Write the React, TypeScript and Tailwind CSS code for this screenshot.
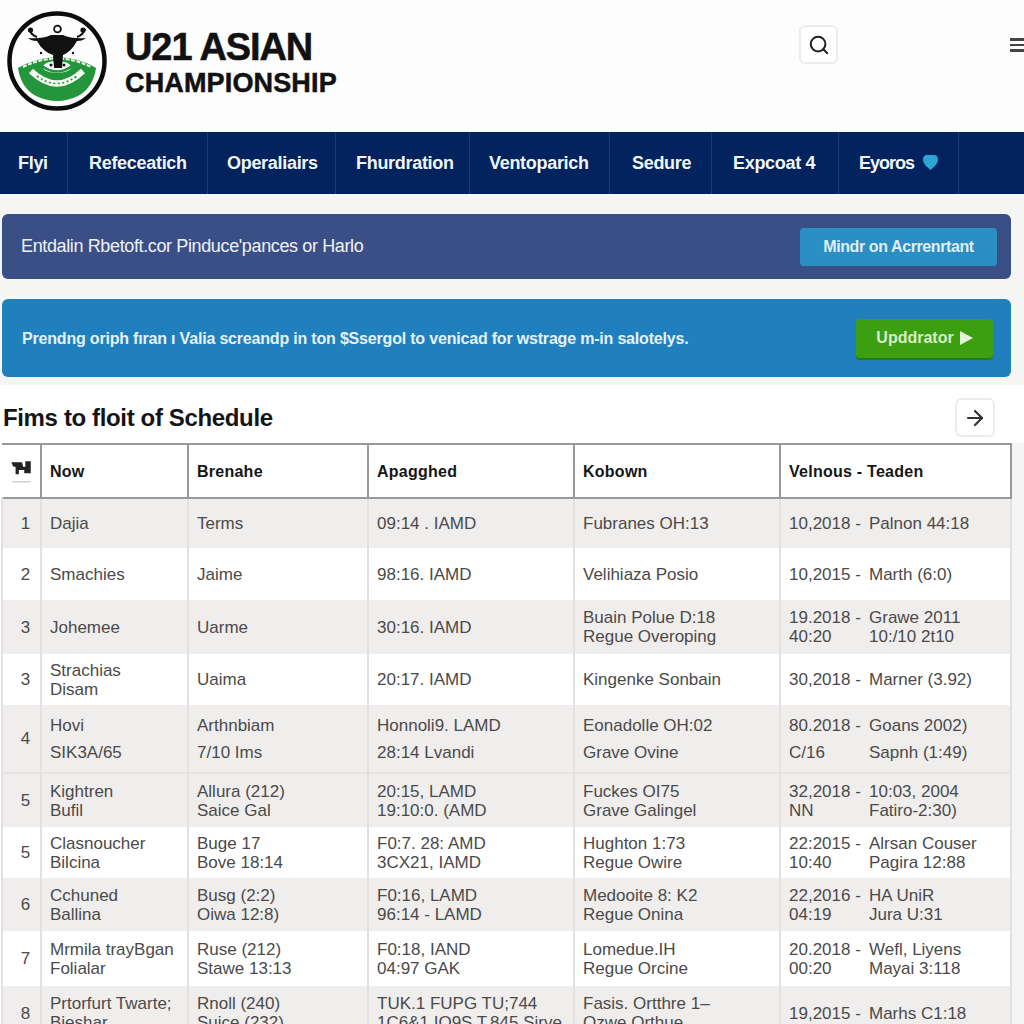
import { ArrowRight, Search } from 'lucide-react';

type Row = {
  no: string;
  bg: string;
  height: string;
  leading?: string;
  now: string[];
  branch: string[];
  applied: string[];
  known: string[];
  venue: string[][];
};

const navItems = [
  { label: 'Flyi', cell: 'w-[68px] pl-[18px]' },
  { label: 'Refeceatich', cell: 'w-[140px] pl-[21px]' },
  { label: 'Operaliairs', cell: 'w-[128px] pl-[19px]' },
  { label: 'Fhurdration', cell: 'w-[134px] pl-[20px]' },
  { label: 'Ventoparich', cell: 'w-[140px] pl-[19px]' },
  { label: 'Sedure', cell: 'w-[102px] pl-[22px]' },
  { label: 'Expcoat 4', cell: 'w-[127px] pl-[21px]' },
];

const rows: Row[] = [
  { no: '1', bg: 'bg-[#f0eded]', height: 'h-[50px]', now: ['Dajia'], branch: ['Terms'], applied: ['09:14 . IAMD'], known: ['Fubranes OH:13'], venue: [['10,2018 -', 'Palnon 44:18']] },
  { no: '2', bg: 'bg-white', height: 'h-[52px]', now: ['Smachies'], branch: ['Jaime'], applied: ['98:16. IAMD'], known: ['Velihiaza Posio'], venue: [['10,2015 -', 'Marth (6:0)']] },
  { no: '3', bg: 'bg-[#f0eded]', height: 'h-[54px]', now: ['Johemee'], branch: ['Uarme'], applied: ['30:16. IAMD'], known: ['Buain Polue D:18', 'Regue Overoping'], venue: [['19.2018 -', 'Grawe 2011'], ['40:20', '10:/10 2t10']] },
  { no: '3', bg: 'bg-white', height: 'h-[51px]', now: ['Strachias', 'Disam'], branch: ['Uaima'], applied: ['20:17. IAMD'], known: ['Kingenke Sonbain'], venue: [['30,2018 -', 'Marner (3.92)']] },
  { no: '4', bg: 'bg-[#f0eded] border-b-2 border-[#e6e3e3]', height: 'h-[68px]', leading: 'leading-[27px]', now: ['Hovi', 'SIK3A/65'], branch: ['Arthnbiam', '7/10 Ims'], applied: ['Honnoli9. LAMD', '28:14 Lvandi'], known: ['Eonadolle OH:02', 'Grave Ovine'], venue: [['80.2018 -', 'Goans 2002)'], ['C/16', 'Sapnh (1:49)']] },
  { no: '5', bg: 'bg-[#f0eded]', height: 'h-[54px]', now: ['Kightren', 'Bufil'], branch: ['Allura (212)', 'Saice Gal'], applied: ['20:15, LAMD', '19:10:0. (AMD'], known: ['Fuckes OI75', 'Grave Galingel'], venue: [['32,2018 -', '10:03, 2004'], ['NN', 'Fatiro-2:30)']] },
  { no: '5', bg: 'bg-white', height: 'h-[51px]', now: ['Clasnoucher', 'Bilcina'], branch: ['Buge 17', 'Bove 18:14'], applied: ['F0:7. 28: AMD', '3CX21, IAMD'], known: ['Hughton 1:73', 'Regue Owire'], venue: [['22:2015 -', 'Alrsan Couser'], ['10:40', 'Pagira 12:88']] },
  { no: '6', bg: 'bg-[#f0eded]', height: 'h-[53px]', now: ['Cchuned', 'Ballina'], branch: ['Busg (2:2)', 'Oiwa 12:8)'], applied: ['F0:16, LAMD', '96:14 - LAMD'], known: ['Medooite 8: K2', 'Regue Onina'], venue: [['22,2016 -', 'HA UniR'], ['04:19', 'Jura U:31']] },
  { no: '7', bg: 'bg-white', height: 'h-[55px]', now: ['Mrmila trayBgan', 'Folialar'], branch: ['Ruse (212)', 'Stawe 13:13'], applied: ['F0:18, IAND', '04:97 GAK'], known: ['Lomedue.IH', 'Regue Orcine'], venue: [['20.2018 -', 'Wefl, Liyens'], ['00:20', 'Mayai 3:118']] },
  { no: '8', bg: 'bg-[#f0eded]', height: 'h-[54px]', now: ['Prtorfurt Twarte;', 'Bieshar'], branch: ['Rnoll (240)', 'Suice (232)'], applied: ['TUK.1 FUPG TU;744', '1C6&1 IO9S T.845 Sirve'], known: ['Fasis. Ortthre 1\u2013', 'Ozwe Orthue'], venue: [['19,2015 -', 'Marhs C1:18']] },
];

const headCell = 'border-l-2 border-[#999] px-2 text-left font-bold tracking-[0.25px] text-[#161616]';
const bodyCell = 'border-l-2 border-[#e2e0e0] px-2 align-middle';

const Lines = ({ items }: { items: string[] }) => (
  <>
    {items.map((line) => (
      <div key={line} className='whitespace-nowrap'>{line}</div>
    ))}
  </>
);

const Logo = () => (
  <svg width={115} height={115} viewBox='0 0 115 115' className='shrink-0'>
    <path d='M18 68 Q35 58 57 57 Q80 58 96 68 Q93 88 78 96 Q57 106 36 96 Q21 88 18 68 Z' fill='#23963c' />
    <path d='M23 67 Q57 50 91 67' fill='none' stroke='#eef6e6' strokeWidth='2' strokeDasharray='4 1.5' />
    <path d='M31 71 Q57 96 83 71' fill='none' stroke='#f4f9f1' strokeWidth='6' />
    <path d='M37 76 Q57 91 77 76' fill='none' stroke='#23963c' strokeWidth='1.6' strokeDasharray='2 2.5' />
    <ellipse cx='57' cy='67' rx='14' ry='6' fill='#fff' />
    <path d='M42 66 Q57 77 72 66' fill='none' stroke='#23963c' strokeWidth='2.5' />
    <path d='M29 29 Q31 35 37 37 M85 29 Q83 35 77 37' fill='none' stroke='#111' strokeWidth='2.2' />
    <path d='M28 38 Q42 39 51 35 L63 35 Q72 39 86 38 Q83 41 77 41 Q71 52 63 55 L62 68 L54 68 L53 55 Q43 52 37 41 Q31 41 28 38 Z' fill='#111' />
    <circle cx='30.5' cy='30' r='2.6' fill='#111' />
    <circle cx='83' cy='30' r='2.6' fill='#111' />
    <circle cx='57.5' cy='29' r='3.4' fill='none' stroke='#111' strokeWidth='1.8' />
    <circle cx='41' cy='53' r='1.2' fill='#111' />
    <circle cx='73' cy='53' r='1.2' fill='#111' />
    <circle cx='51' cy='65' r='1.5' fill='#111' />
    <circle cx='64' cy='65' r='1.5' fill='#111' />
    <circle cx='57' cy='61' r='47.5' fill='none' stroke='#0c0c0c' strokeWidth='4.5' />
  </svg>
);

export default function App() {
  return (
    <div className="h-[1024px] w-[1024px] overflow-hidden bg-white font-['Liberation_Sans',Arial,sans-serif]">
      <header className='flex h-[132px] items-start justify-between bg-[#fdfdfd]'>
        <div className='flex items-start'>
          <Logo />
          <div className='ml-[10px] pt-[26px] font-bold text-[#111] [-webkit-text-stroke:0.5px_#111]'>
            <div className='text-[38px] leading-[42px] tracking-[-1.1px]'>U21 ASIAN</div>
            <div className='text-[27px] leading-[30px] tracking-[0.15px]'>CHAMPIONSHIP</div>
          </div>
        </div>
        <div className='flex items-start'>
          <button className='mt-[25px] flex h-[39px] w-[39px] items-center justify-center rounded-md border-2 border-[#ececec] bg-white'>
            <Search size={22} strokeWidth={2.2} className='text-[#222]' />
          </button>
          <div className='ml-[172px] mt-[38px] flex w-[14px] flex-col gap-[3px]'>
            <span className='h-[2.5px] bg-[#444]' />
            <span className='h-[2.5px] bg-[#444]' />
            <span className='h-[2.5px] bg-[#444]' />
          </div>
        </div>
      </header>

      <nav className='flex h-[62px] bg-[#02235e] text-[18px] font-bold tracking-[-0.3px] text-[#f2f5f8]'>
        {navItems.map((item) => (
          <div key={item.label} className={`flex items-center border-r border-[#1b3a72] ${item.cell}`}>
            <span className='whitespace-nowrap'>{item.label}</span>
          </div>
        ))}
        <div className='flex w-[120px] items-center gap-[9px] border-r border-[#1b3a72] pl-[20px]'>
          <span className='tracking-[-1px]'>Eyoros</span>
          <svg width={15} height={15} viewBox='0 0 15 15' className='-mt-[2px]'>
            <path d='M7.5 15 Q0 9 0 5 Q0 0 4 0 L11 0 Q15 0 15 5 Q15 9 7.5 15 Z' fill='#2ba4d6' />
          </svg>
        </div>
      </nav>

      <section className='h-[191px] bg-[#f5f5f4] pl-[2px] pr-[13px] pt-[20px]'>
        <div className='flex h-[65px] items-center justify-between rounded-md bg-[#3a4f85] pl-[19px] pr-[14px]'>
          <span className='text-[18px] tracking-[-0.37px] text-[#f0f2f6]'>Entdalin Rbetoft.cor Pinduce'pances or Harlo</span>
          <button className='flex h-[38px] w-[197px] items-center justify-center rounded bg-[#2b8fc4] text-[16px] font-bold tracking-[-0.4px] text-[#dfeef6]'>
            Mindr on Acrrenrtant
          </button>
        </div>
        <div className='mt-[20px] flex h-[78px] items-center justify-between rounded-md bg-[#1f80bd] pl-[20px] pr-[18px]'>
          <span className='pt-[2px] text-[16px] font-bold tracking-[-0.19px] text-[#e6f1f8]'>Prendng oriph fıran ı Valia screandp in ton $Ssergol to venicad for wstrage m-in salotelys.</span>
          <button className='flex h-[39px] w-[137px] items-center justify-center gap-[6px] rounded bg-[#3c9f12] text-[16px] font-bold text-[#d8eec8] shadow-[0_2px_0_#2a7a10]'>
            Upddrator
            <svg width={13} height={14} viewBox='0 0 13 14'><path d='M0 0 L13 7 L0 14 Z' fill='#e4f2d8' /></svg>
          </button>
        </div>
      </section>

      <section className='flex h-[58px] items-start justify-between pl-[3px] pr-[29px] pt-[13px]'>
        <h2 className='mt-[5px] text-[24px] font-bold leading-[30px] tracking-[-0.36px] text-[#141414]'>Fims to floit of Schedule</h2>
        <button className='flex h-[39px] w-[40px] items-center justify-center rounded-md border-2 border-[#ececec] bg-white'>
          <ArrowRight size={24} strokeWidth={2.2} className='text-[#333]' />
        </button>
      </section>

      <div className='flex'>
        <div className='w-[1px] shrink-0' />
        <table className='w-[1009px] table-fixed border-collapse text-[17px] leading-[19px] text-[#4a4a4a]'>
          <colgroup>
            <col className='w-[39px]' />
            <col className='w-[147px]' />
            <col className='w-[180px]' />
            <col className='w-[206px]' />
            <col className='w-[206px]' />
            <col className='w-[231px]' />
          </colgroup>
          <thead>
            <tr className='h-[54px] border-y-2 border-[#999] text-[16px]'>
              <th className='px-0'>
                <svg width={24} height={26} viewBox='0 0 22 24' className='mx-auto'>
                  <path d='M2 4 H12 L13 8 H15 V3 H18 V3 H20 V14 H14 V11 H9 V15 H6 V8 H4 Z' fill='#222' />
                  <path d='M3 22 H20' stroke='#bbb' strokeWidth='1' />
                </svg>
              </th>
              <th className={headCell}>Now</th>
              <th className={headCell}>Brenahe</th>
              <th className={headCell}>Apagghed</th>
              <th className={headCell}>Kobown</th>
              <th className={`${headCell} border-r-2`}>Velnous - Teaden</th>
            </tr>
          </thead>
          <tbody>
            {rows.map((row, i) => (
              <tr key={i} className={`${row.bg} ${row.height} ${row.leading ?? ''}`}>
                <td className='border-l-2 border-[#e2e0e0] pl-[8px] text-center'>{row.no}</td>
                <td className={bodyCell}><Lines items={row.now} /></td>
                <td className={bodyCell}><Lines items={row.branch} /></td>
                <td className={bodyCell}><Lines items={row.applied} /></td>
                <td className={bodyCell}><Lines items={row.known} /></td>
                <td className={`${bodyCell} border-r-2`}>
                  {row.venue.map((parts) => (
                    <div key={parts[0]} className='grid grid-cols-[80px_1fr] whitespace-nowrap'>
                      <span>{parts[0]}</span>
                      <span>{parts[1]}</span>
                    </div>
                  ))}
                </td>
              </tr>
            ))}
          </tbody>
        </table>
        <div className='flex-1 bg-[#f5f5f5]' />
      </div>
    </div>
  );
}
